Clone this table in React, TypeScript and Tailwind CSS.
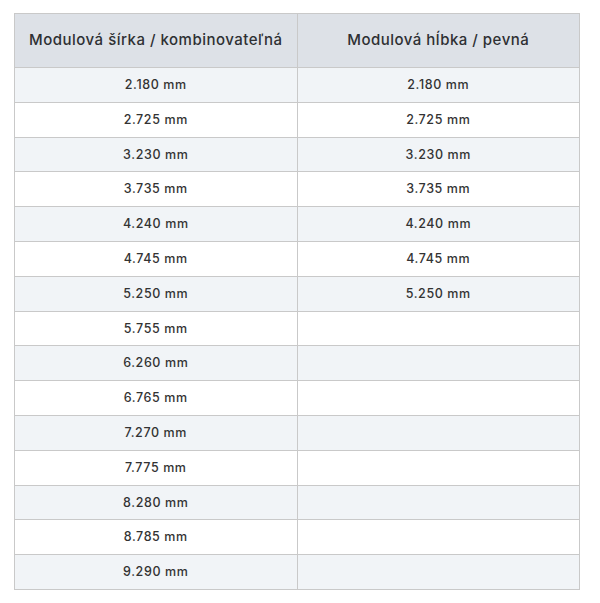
const widths = [
  "2.180", "2.725", "3.230", "3.735", "4.240", "4.745", "5.250", "5.755",
  "6.260", "6.765", "7.270", "7.775", "8.280", "8.785", "9.290",
];
const depths = ["2.180", "2.725", "3.230", "3.735", "4.240", "4.745", "5.250"];

export default function App() {
  return (
    <div className="w-[600px] h-[603px] bg-white pt-[13px] pl-[14px] font-['Inter',sans-serif] text-[#333]">
      <table className="w-[566px] border-collapse table-fixed">
        <thead>
          <tr className="bg-[#dde1e7] h-[54px]">
            <th className="border border-[#c9c9c9] font-medium text-[15px] tracking-[0.5px] text-[#2e3033]">
              Modulová šírka / kombinovateľná
            </th>
            <th className="border border-[#c9c9c9] font-medium text-[15px] tracking-[0.5px] text-[#2e3033]">
              Modulová hĺbka / pevná
            </th>
          </tr>
        </thead>
        <tbody>
          {widths.map((w, i) => (
            <tr key={w} className={i % 2 === 0 ? "bg-[#f1f4f7] h-[34.8px]" : "bg-white h-[34.8px]"}>
              <td className="border border-[#c9c9c9] text-center font-medium text-[12.5px] tracking-[0.6px] p-0 pt-px">
                {w} mm
              </td>
              <td className="border border-[#c9c9c9] text-center font-medium text-[12.5px] tracking-[0.6px] p-0 pt-px">
                {depths[i] ? `${depths[i]} mm` : ""}
              </td>
            </tr>
          ))}
        </tbody>
      </table>
    </div>
  );
}
